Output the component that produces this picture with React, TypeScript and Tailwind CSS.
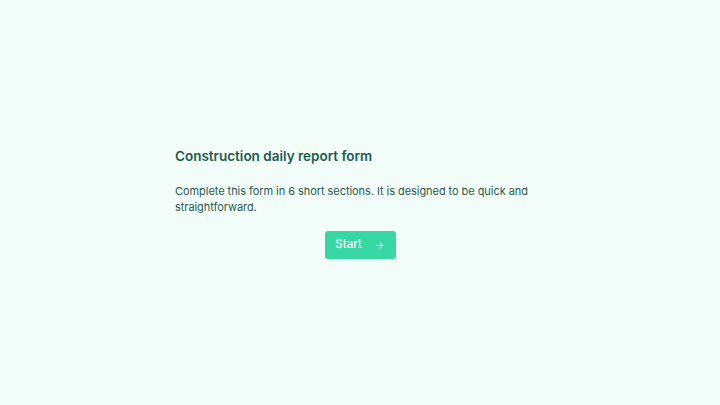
import { ArrowRight } from "lucide-react";

export default function App() {
  return (
    <div
      className="min-h-screen w-full bg-[#f2fdf9] flex items-center justify-center"
      style={{ fontFamily: "Inter, 'Noto Sans', sans-serif" }}
    >
      <div className="w-[370px] flex flex-col">
        <h1 className="text-[13.5px] leading-[20px] font-semibold text-[#1c5c4d]">
          Construction daily report form
        </h1>
        <p className="mt-[17px] text-[11px] leading-[16px] tracking-[-0.005em] text-[#2b5a50]">
          Complete this form in 6 short sections. It is designed to be quick and
          straightforward.
        </p>
        <div className="mt-[16px] flex justify-center">
          <button className="h-[28px] w-[71px] rounded-[3px] bg-[#37d6a2] text-white text-[11.5px] font-medium flex items-center justify-center gap-[12px]">
            <span>Start</span>
            <ArrowRight size={11} strokeWidth={2.2} />
          </button>
        </div>
      </div>
    </div>
  );
}
